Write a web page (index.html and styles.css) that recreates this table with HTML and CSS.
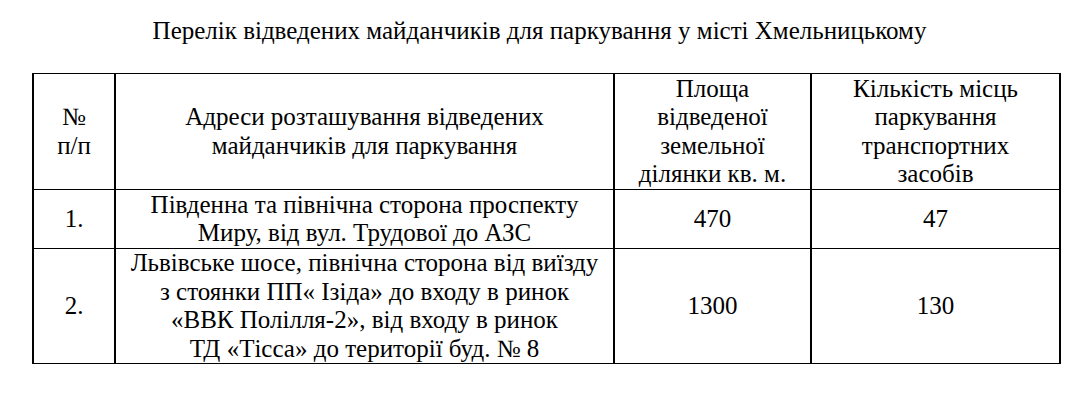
FILE: index.html
```html
<!DOCTYPE html>
<html lang="uk">
<head>
<meta charset="utf-8">
<title>Перелік майданчиків</title>
<link rel="stylesheet" href="styles.css">
</head>
<body>
<div class="page">
  <p class="title">Перелік відведених майданчиків для паркування у місті Хмельницькому</p>
  <table class="parking">
    <colgroup>
      <col class="c-num">
      <col class="c-addr">
      <col class="c-area">
      <col class="c-count">
    </colgroup>
    <tr class="r-head">
      <td>№<br>п/п</td>
      <td>Адреси розташування відведених<br>майданчиків для паркування</td>
      <td>Площа<br>відведеної<br>земельної<br>ділянки кв. м.</td>
      <td>Кількість місць<br>паркування<br>транспортних<br>засобів</td>
    </tr>
    <tr class="r-one">
      <td>1.</td>
      <td>Південна та північна сторона проспекту<br>Миру, від вул. Трудової до АЗС</td>
      <td>470</td>
      <td>47</td>
    </tr>
    <tr class="r-two">
      <td>2.</td>
      <td>Львівське шосе, північна сторона від виїзду<br>з стоянки ПП« Ізіда» до входу в ринок<br>«ВВК Полілля-2», від входу в ринок<br>ТД «Тісса» до території буд. № 8</td>
      <td>1300</td>
      <td>130</td>
    </tr>
  </table>
</div>
</body>
</html>
```
FILE: styles.css
```css
body {
  margin: 0;
  padding: 0;
  background: #ffffff;
}

.page {
  font-family: "Liberation Serif", "Times New Roman", serif;
  font-size: 25px;
  line-height: 28.5px;
  color: #000000;
  padding-top: 17px;
}

.title {
  margin: 0 0 27.5px 0;
  text-align: center;
}

.parking {
  margin-left: 32px;
  border-collapse: separate;
  border-spacing: 0;
  table-layout: fixed;
  width: 1029px;
  border-left: 2px solid #000;
  border-top: 1px solid #000;
}

.c-num { width: 82px; }
.c-addr { width: 499px; }
.c-area { width: 197px; }
.c-count { width: 249px; }

.parking td {
  padding: 0;
  text-align: center;
  vertical-align: middle;
  border-right: 2px solid #000;
  border-bottom: 1px solid #000;
  box-sizing: border-box;
  white-space: nowrap;
}

.r-head td { height: 116px; }
.r-one td { height: 59px; }
.r-two td { height: 115px; }
```
